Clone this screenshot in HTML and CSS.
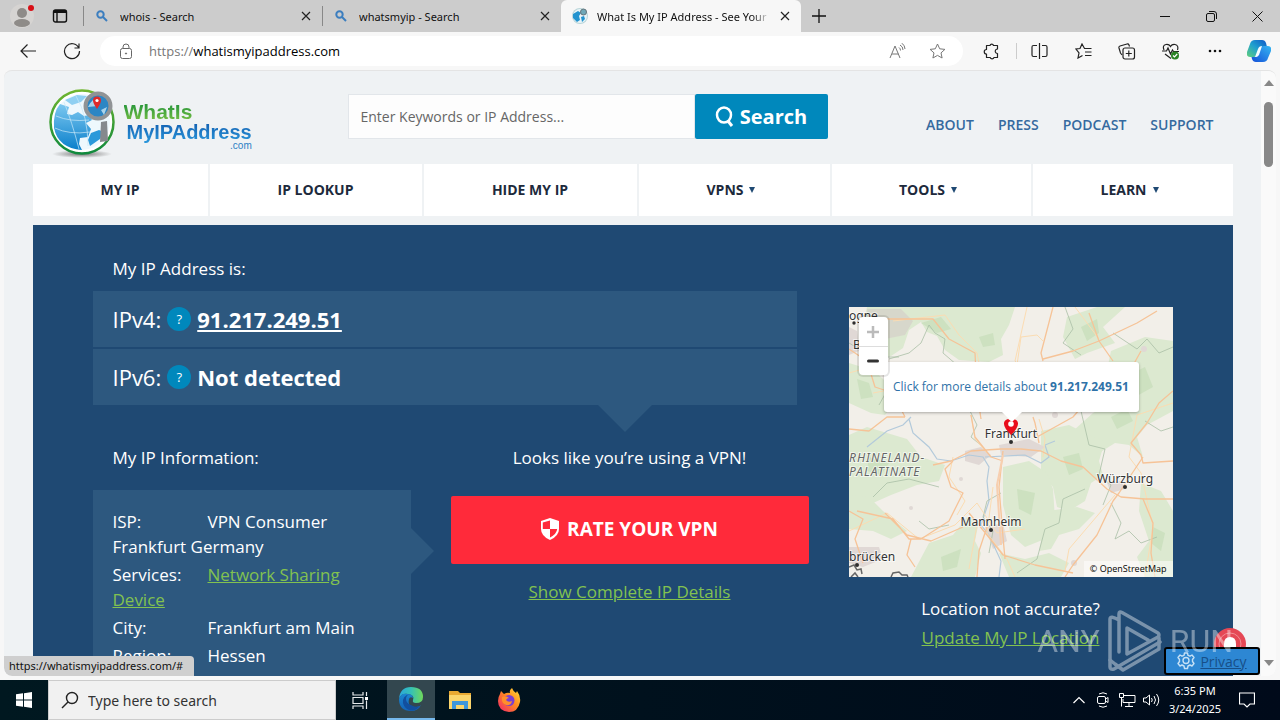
FILE: index.html
```html
<!DOCTYPE html>
<html lang="en">
<head>
    <meta charset="UTF-8">
    <meta name="viewport" content="width=device-width, initial-scale=1.0">
    <title>What Is My IP Address</title>
    <link rel="stylesheet" href="styles.css">
</head>
<body>
    <!-- Browser tabs -->
    <header class="tabstrip">
        <button class="profile" aria-label="Profile">
            <svg width="24" height="24" viewBox="0 0 24 24"><circle cx="12" cy="12" r="12" fill="#d6d4d2"/><circle cx="12" cy="9" r="5" fill="#8e8b88"/><ellipse cx="12" cy="19" rx="8" ry="4" fill="#8e8b88"/><circle cx="21" cy="4" r="3" fill="#d80f16"/></svg>
        </button>
        <button class="workspaces" aria-label="Tab actions">
            <svg width="16" height="16" viewBox="0 0 16 16" fill="none" stroke="#111" stroke-width="1.4"><rect x="1.5" y="2" width="13" height="12" rx="2"/><path d="M2 3.5h12" stroke-width="3"/><path d="M5 4v10"/></svg>
        </button>
        <div class="tab">
            <svg width="12" height="12" viewBox="0 0 12 12" fill="none" stroke="#3c7ebf" stroke-width="2"><circle cx="4.5" cy="4.5" r="3.2"/><path d="M7 7l4 4"/></svg>
            <span class="tab-title">whois - Search</span>
            <button class="tab-close" aria-label="Close tab"><svg width="10" height="10" viewBox="0 0 10 10" stroke="#222" stroke-width="1.2"><path d="M1 1l8 8M9 1l-8 8"/></svg></button>
        </div>
        <div class="tab">
            <svg width="12" height="12" viewBox="0 0 12 12" fill="none" stroke="#3c7ebf" stroke-width="2"><circle cx="4.5" cy="4.5" r="3.2"/><path d="M7 7l4 4"/></svg>
            <span class="tab-title">whatsmyip - Search</span>
            <button class="tab-close" aria-label="Close tab"><svg width="10" height="10" viewBox="0 0 10 10" stroke="#222" stroke-width="1.2"><path d="M1 1l8 8M9 1l-8 8"/></svg></button>
        </div>
        <div class="tab active">
            <svg width="16" height="16" viewBox="0 0 16 16"><circle cx="8" cy="8" r="8" fill="#b9d5d9"/><circle cx="8" cy="8" r="7" fill="#e9f4f8"/><path d="M1 6l5-3 3 2-2 3 1 4-3 2-4-4zM9 9l3-1 1 3-3 3z" fill="#2293cf"/><circle cx="11.500" cy="4" r="3" fill="#6fa8b8" stroke="#64747a"/></svg>
            <span class="tab-title fade">What Is My IP Address - See Your</span>
            <button class="tab-close" aria-label="Close tab"><svg width="10" height="10" viewBox="0 0 10 10" stroke="#222" stroke-width="1.2"><path d="M1 1l8 8M9 1l-8 8"/></svg></button>
        </div>
        <button class="new-tab" aria-label="New tab"><svg width="14" height="14" viewBox="0 0 14 14" stroke="#111" stroke-width="1.3"><path d="M7 0v14M0 7h14"/></svg></button>
        <div class="window-controls">
            <button aria-label="Minimize"><svg width="10" height="10" viewBox="0 0 10 10" stroke="#111"><path d="M0 5.500h10"/></svg></button>
            <button aria-label="Restore"><svg width="11" height="11" viewBox="0 0 11 11" fill="none" stroke="#111"><rect x=".5" y="2.500" width="8" height="8" rx="1.500"/><path d="M3 .5h5q2.500 0 2.500 2.500v5"/></svg></button>
            <button aria-label="Close"><svg width="11" height="11" viewBox="0 0 11 11" stroke="#111"><path d="M.5.5l10 10M10.500.5l-10 10"/></svg></button>
        </div>
    </header>

    <!-- Address bar -->
    <div class="toolbar">
        <button class="tool" aria-label="Back"><svg width="16" height="14" viewBox="0 0 16 14" fill="none" stroke="#222" stroke-width="1.2"><path d="M16 7H1M7.500.5L1 7l6.500 6.500"/></svg></button>
        <button class="tool" aria-label="Refresh"><svg width="18" height="18" viewBox="0 0 18 18" fill="none" stroke="#222" stroke-width="1.2"><path d="M15.800 6A7.500 7.500 0 1 0 16.500 9M16 1.500V6h-4.500"/></svg></button>
        <form class="address">
            <svg class="lock" width="14" height="16" viewBox="0 0 14 16" fill="none" stroke="#666"><rect x="1.500" y="5.500" width="11" height="10" rx="2"/><path d="M4 5.500V4a3 3 0 0 1 6 0v1.500"/><circle cx="7" cy="10.500" r=".6" fill="#666"/></svg>
            <label class="scheme" for="url">https://</label>
            <input id="url" class="url" type="text" value="whatismyipaddress.com">
            <button type="button" class="address-btn" aria-label="Read aloud"><svg width="17" height="16" viewBox="0 0 17 16" fill="none" stroke="#777"><path d="M1 15L6 3l5 12M3 11h6.500M10 4.500q1.500 1 1.500 3M11 2q3 1.500 3 5M12.500 0Q16 2 16 6"/></svg></button>
            <button type="button" class="address-btn" aria-label="Add to favorites"><svg width="17" height="16" viewBox="0 0 17 16" fill="none" stroke="#777"><path d="M8.500 1l2.200 4.800 5.200.6-3.900 3.500 1.100 5.100-4.600-2.600L3.900 15 5 9.900 1.100 6.400l5.200-.6z" stroke-linejoin="round"/></svg></button>
        </form>
        <button class="tool extensions" aria-label="Extensions"><svg width="17" height="17" viewBox="0 0 17 17" fill="none" stroke="#222" stroke-width="1.200"><path d="M3.500 2.500H7a1.800 1.800 0 0 1 3.500 0h4V6a1.800 1.800 0 1 0 0 4.500v4H11a2 2 0 0 1-3.800 0H3.500V11a1.900 1.900 0 0 1 0-4.500z" stroke-linejoin="round"/></svg></button>
        <span class="divider"></span>
        <button class="tool" aria-label="Split screen"><svg width="17" height="16" viewBox="0 0 17 16" fill="none" stroke="#222" stroke-width="1.200"><path d="M6 2.500H2.500q-1.500 0-1.500 1.500v8q0 1.500 1.500 1.500H6M11 2.500h3.500q1.500 0 1.500 1.500v8q0 1.500-1.500 1.500H11M8.500 0v16"/></svg></button>
        <button class="tool" aria-label="Favorites"><svg width="17" height="16" viewBox="0 0 17 16" fill="none" stroke="#222" stroke-width="1.200"><path d="M12 5.500H9.500L7 1 5 5.500 1 6l3 4-1 5 4.500-2.500M10 5.500h6.500M10 9h6.500M10 12.500h6.500"/></svg></button>
        <button class="tool" aria-label="Collections"><svg width="18" height="17" viewBox="0 0 18 17" fill="none" stroke="#222" stroke-width="1.200"><path d="M4 12L2.500 10 1 5q-.4-1.600 1-2l7-2q1.500-.3 2 1l.5 1.500"/><rect x="5" y="5" width="11.500" height="11" rx="2"/><path d="M10.800 7.500v6M7.800 10.500h6"/></svg></button>
        <button class="tool" aria-label="Browser essentials"><svg width="18" height="17" viewBox="0 0 18 17" fill="none" stroke="#222" stroke-width="1.200"><path d="M2 7Q0 2.500 4 1.500q3-.5 4.500 2Q10 1 13 1.500q4 1 2.500 5.500M0 8h4.500l1.500-3 2.500 6 2-4 1 1.500H17M3 11l6 4.500"/><circle cx="13" cy="12.500" r="4" fill="#2a8224" stroke="none"/><path d="M11 12.500l1.500 1.500 2.700-3" stroke="#fff"/></svg></button>
        <button class="tool" aria-label="Settings and more"><svg width="14" height="4" viewBox="0 0 14 4" fill="#111"><circle cx="2" cy="2" r="1.300"/><circle cx="7" cy="2" r="1.300"/><circle cx="12" cy="2" r="1.300"/></svg></button>
        <button class="tool" aria-label="Copilot">
            <svg width="24" height="22" viewBox="0 0 24 22">
                <defs>
                    <linearGradient id="cpA" x1="0" y1="1" x2="1" y2="0"><stop offset="0" stop-color="#62cf7c"/><stop offset=".5" stop-color="#1fa0cf"/><stop offset="1" stop-color="#0f56c8"/></linearGradient>
                    <linearGradient id="cpB" x1="0" y1="1" x2="1" y2="0"><stop offset="0" stop-color="#1550d8"/><stop offset="1" stop-color="#35b6f2"/></linearGradient>
                </defs>
                <path d="M8 0h7q3 0 4 3l1 4h-5q-3 0-4 4l-1 4q-1 2-3 2H3q-4 0-3-5L3 4q1-4 5-4z" fill="url(#cpA)"/>
                <path d="M16 22H9q-3 0-4-3l-.5-2H8q3 0 4-4l1-4q1-3 4-3h4q4 0 3 5l-3 7q-1 4-5 4z" fill="url(#cpB)"/>
                <path d="M11 9q1-3 4-3l-3 9q-1 2-4 2z" fill="#f5fbff"/>
            </svg>
        </button>
    </div>

    <!-- Page -->
    <div class="viewport">
        <main class="page">
            <div class="container">
                <div class="site-header">
                    <a class="logo" href="#">
                        <svg width="68" height="72" viewBox="0 0 68 72">
                            <defs>
                                <linearGradient id="ring" x1="0" y1="0" x2="0" y2="1"><stop offset="0" stop-color="#6fb52f"/><stop offset="1" stop-color="#0f8a3d"/></linearGradient>
                                <linearGradient id="sea" x1="0" y1="0" x2="0" y2="1"><stop offset="0" stop-color="#7cc8f0"/><stop offset="1" stop-color="#0a7fcb"/></linearGradient>
                                <radialGradient id="shade"><stop offset="0" stop-color="#777"/><stop offset="1" stop-color="#eff2f4"/></radialGradient>
                            </defs>
                            <ellipse cx="34" cy="67" rx="30" ry="4" fill="url(#shade)"/>
                            <circle cx="34" cy="35" r="31.500" fill="#fff" stroke="url(#ring)" stroke-width="2.500"/>
                            <circle cx="34" cy="35" r="28" fill="#eef8fd"/>
                            <path d="M12 17l9 3-2 7 5 1 6-3 6 4 5-1 3 5-6 3 5 6-3 8-8 1-1 6 3 6Q10 61 6 41 5 25 12 17z" fill="url(#sea)"/>
                            <path d="M17 13l12-5 10 1-6 6-9 3z" fill="#8fd0f2"/>
                            <path d="M42 59l10-7 4-7-5-2-8 3-3 7z" fill="#2a99da"/>
                            <path d="M8 29q14 6 33 4M7 41q14 7 35 4M16 15q8 20 15 47M28 9q12 20 12 50" fill="none" stroke="#c9e8f8" stroke-width=".7"/>
                            <path d="M53 35l6-1 1 20-8 1z" fill="#85898d"/>
                            <circle cx="50" cy="19" r="12.500" fill="#2c86c4" stroke="#909395" stroke-width="4"/>
                            <path d="M40 20q4-9 12-10l-2 9zM53 23l6-3-3 8z" fill="#a9d3ea"/>
                            <path d="M49 22q-4-6-4-8.500a4 4 0 0 1 8 0q0 2.500-4 8.500z" fill="#df2a2a"/><circle cx="49" cy="13.500" r="1.600" fill="#fff"/>
                        </svg>
                        <span class="logo-text">
                            <span class="logo-top">WhatIs</span>
                            <span class="logo-bottom">MyIPAddress</span>
                            <span class="logo-com">.com</span>
                        </span>
                    </a>
                    <form class="search">
                        <input type="text" placeholder="Enter Keywords or IP Address..." aria-label="Search">
                        <button type="button"><svg width="20" height="22" viewBox="0 0 20 22" fill="none" stroke="#fff" stroke-width="2.500"><ellipse cx="9" cy="9" rx="7" ry="7.500"/><path d="M13 15l4 5" stroke-width="3"/></svg>Search</button>
                    </form>
                    <nav class="top-links">
                        <a href="#">ABOUT</a>
                        <a href="#">PRESS</a>
                        <a href="#">PODCAST</a>
                        <a href="#">SUPPORT</a>
                    </nav>
                </div>

                <nav class="main-nav">
                    <a href="#">MY IP</a>
                    <a href="#">IP LOOKUP</a>
                    <a href="#">HIDE MY IP</a>
                    <a href="#">VPNS <span class="arrow"></span></a>
                    <a href="#">TOOLS <span class="arrow"></span></a>
                    <a href="#">LEARN <span class="arrow"></span></a>
                </nav>

                <section class="hero">
                    <div class="hero-left">
                        <p class="heading">My IP Address is:</p>
                        <div class="ip-list">
                            <div class="ip-row"><span>IPv4:</span><button class="help">?</button><a href="#">91.217.249.51</a></div>
                            <div class="ip-row"><span>IPv6:</span><button class="help">?</button><strong>Not detected</strong></div>
                        </div>
                        <div class="details">
                            <div class="info">
                                <p class="heading">My IP Information:</p>
                                <div class="info-panel">
                                    <p><span class="label">ISP:</span>VPN Consumer Frankfurt Germany</p>
                                    <p><span class="label">Services:</span><a href="#">Network Sharing Device</a></p>
                                    <p><span class="label">City:</span>Frankfurt am Main</p>
                                    <p><span class="label">Region:</span>Hessen</p>
                                </div>
                            </div>
                            <div class="vpn">
                                <p>Looks like you’re using a VPN!</p>
                                <button class="rate"><svg width="18" height="22" viewBox="0 0 18 22"><path d="M9 0l9 3v8q0 7-9 11-9-4-9-11V3z" fill="#fff"/><path d="M9 2.500V11H1.800V4.500zM9 11h7.200q-.5 5-7.200 8.500z" fill="#ff2a3a"/></svg>RATE YOUR VPN</button>
                                <a href="#">Show Complete IP Details</a>
                            </div>
                        </div>
                    </div>

                    <div class="hero-right">
                        <div class="map">
                            <svg class="map-art" viewBox="0 0 324 270" preserveAspectRatio="xMidYMid slice">
                                <rect width="324" height="270" fill="#f2efe9"/>
                                <g fill="#dce9d0">
                                    <path d="M18 0h148l-6 18-8 14 2 16-14 7-30-2-14-10-8-14-10-4-6-10-12 8-6 18-12 8-22 4-8-20z"/>
                                    <path d="M0 56l26 8 14 14 4 20-8 10-14-2-22-10zM0 128l18-8 20 6 20 6 14 18 24 8-6 16-22 4-26 10-18 8-24-6z"/>
                                    <path d="M218 10l30-10h28l-22 20 12 16-28 10-12 6-12-22z"/>
                                    <path d="M262 44l34-14 28 4v70l-26 14-10 12 6 20-14-12-14-2-16 10-20-4-6-18 20-18 18-10-6-24z"/>
                                    <path d="M192 124l28-6 20 10 16 6-6 20 4 14-12 8-6 18-16 10-12-4-4-20-12-14z"/>
                                    <path d="M154 160l26-6 18 12 6 16 2 30-10 20-20 8-14-12-8-30z"/>
                                    <path d="M0 188l20 2 14 14 24 20-16 8-18-8-24-2zM80 236l24-8 14-18 12 4-4 20 6 12-6 24H62zM150 246l26 6 24-6 20 10-8 14h-52z"/>
                                    <path d="M292 176l20 8 12 20v66h-28l-8-20 12-16-10-30zM198 204l30-4 18 6-16 16-20 6-8 14-12 2z"/>
                                </g>
                                <g fill="#c6ddb9" opacity=".7">
                                    <path d="M72 16l20-6 10 12-14 4zM8 72l12 4 4 14-12 2zM20 150l20 6-8 12-14-4zM168 182l18 4-4 22-12-6zM214 150l16-4 4 16-14 6zM276 70l20-10 8 20-18 10zM304 220l12 6-4 18-10-8zM92 250l20-8-4 18-14 4zM232 20l16-8 2 14-12 8zM130 30l14-4 2 12-12 2zM262 110l16-8 6 12-16 8z"/>
                                </g>
                                <path d="M18 2h34l12 12-8 14-20 4-16-10z" fill="#d7d7cb"/>
                                <g fill="#e0d8d5">
                                    <path d="M116 144l16-4 10 8-12 10-14-4zM150 138l30-6 16 8-14 10-30-2zM136 220l18-4 4 18-14 8zM0 240l30 0 4 12-20 8-14-4zM258 176l14-2 4 8-14 4zM0 20l8 4 2 20-10 4z"/>
                                    <circle cx="62" cy="201" r="2"/><circle cx="245" cy="92" r="3"/><circle cx="206" cy="108" r="3"/><circle cx="295" cy="42" r="3"/><circle cx="225" cy="256" r="3"/><circle cx="112" cy="172" r="2"/>
                                </g>
                                <g fill="none" stroke="#b3cadb" stroke-width="1.200">
                                    <path d="M60 112l4 14 16 14 8 12 14 2 18-6 14 2 6 10-2 14 2 20-8 24 8 10 12 26-2 16M18 140l20-16 16-6 8-8"/>
                                    <path d="M136 150l40-2 16 8 8-6-4-12 10-4"/>
                                </g>
                                <g fill="none" stroke="#aabfa6" stroke-width=".8">
                                    <path d="M40 52l20-6 12-10 8-18 6 8 10 6-2 14 14 12 12 10M120 102l8 16-6 12 12 10M206 72l8 22 18 10 8 34 16 4-6 26 12 10-8 20M264 26l24 16 10-10 12 14 14-6M152 186l-14 8-4 16 10 14-4 22M262 196l10 20-6 16 14-8 12 12 16-6M236 182l-22 10-4 24-14 6-8 30-20 14M84 88l14-8 20 4M60 74l-20 6-10 18M0 36l24 14 26 0M216 0l8 22-10 14 18 12M296 114l16 10 12-4M24 190l14-14 22-4 30 8M70 214l10 8 20-4"/>
                                </g>
                                <g fill="none" stroke="#fbdcb2" stroke-width="1">
                                    <path d="M44 14l52-6 14 20 18 18 2 10M178 0l-12 54 10 10M168 58l4-28 16-2 6 6M226 0l24 32M324 96l-36 12-8 42 12 16 12 54-8 50M0 224l38-18 32 26 36-14 22-22 20 30 28-4M122 108l4 24 12 14M190 112l6 20-2 18M56 80L24 86M0 66l28-8M128 218l-8 44M144 180l-6 46 20 26 8 18M216 264l4-22 46-54M104 150l-4 20 16 24-8 14"/>
                                </g>
                                <g fill="none" stroke="#f6c397" stroke-width="1.300" stroke-linejoin="round">
                                    <path d="M20 12h64l16 20 26 14 2 40 4 26M194 52l30-8 26-10 38-18 20-12M204 0l-12 46 2 8M240 6l10 28 14 20M0 42l18 12 8 26 18 6 12 24"/>
                                    <path d="M0 122l20 2 18-14h18M84 158l18-4 20-10 30-2 20 0 20 2 20 10 22 6 24 22 14 8 24 2h48M122 108l4 22 16 20 12 4M188 130l36-20 24-28 34-20 10-18M190 136l-4-20-2-6M324 84l-14 12-12 20-16 20 10 12 2 8 30-2M264 194l-16 34-24 30-8 12"/>
                                    <path d="M154 144l-4 36 4 50 2 22M104 154l-8 8 6 18 12 6-14 28-28 18-12 0-16-20-36-8M36 206l22 22 24 6 32-14M62 232l-4 16 8 12M120 206l18 22 16 20 32 10 38 8M138 220l-8 24-2 26M294 150l-12 18-12 18-6 8M294 192l10 24-2 30 4 24M0 204l14 8-8 20 8 24"/>
                                </g>
                                <path d="M154 148l-6 30 4 60" fill="none" stroke="#f7cfb0" stroke-width="2"/>
                                <path d="M0 260l5-2 3 5 4-1 1 5M2 270l4-4 3 4M42 270l2-4 6-1 3 3 5 0 1 2" fill="none" stroke="#666" stroke-width="1.500"/>
                                <g fill="#2d2d2d" stroke="none"><circle cx="5" cy="16" r="1.700"/><circle cx="162" cy="135" r="2"/><circle cx="276" cy="180" r="2"/><circle cx="142" cy="223" r="2"/><circle cx="8" cy="258" r="2"/></g>
                                <g class="map-labels">
                                    <text x="0" y="13">ogne</text>
                                    <text x="4" y="42">B</text>
                                    <text x="162" y="131" text-anchor="middle">Frankfurt</text>
                                    <text x="276" y="176" text-anchor="middle">Würzburg</text>
                                    <text x="142" y="219" text-anchor="middle">Mannheim</text>
                                    <text x="0" y="254">brücken</text>
                                    <text class="region" x="0" y="155">RHINELAND-</text>
                                    <text class="region" x="0" y="169">PALATINATE</text>
                                </g>
                                <path d="M162 128q-7-7-7-11a7 5 0 0 1 4-5l3 2 3-2a7 5 0 0 1 4 5q0 4-7 11z" fill="#e90d1b"/><circle cx="162" cy="117" r="2.800" fill="#fff"/>
                            </svg>
                            <div class="popup"><a href="#">Click for more details about <b>91.217.249.51</b></a></div>
                            <div class="zoom">
                                <button disabled aria-label="Zoom in"><svg width="12" height="12" viewBox="0 0 12 12" stroke="#bbb" stroke-width="2.500"><path d="M6 0v12M0 6h12"/></svg></button>
                                <button aria-label="Zoom out"><svg width="12" height="12" viewBox="0 0 12 12" stroke="#333" stroke-width="3" stroke-linecap="round"><path d="M1.500 6h9"/></svg></button>
                            </div>
                            <span class="credit">© OpenStreetMap</span>
                        </div>
                        <div class="location">
                            <p>Location not accurate?</p>
                            <a href="#">Update My IP Location</a>
                        </div>
                    </div>
                </section>
            </div>
        </main>

        <div class="scrollbar">
            <svg width="10" height="6" viewBox="0 0 10 6"><path d="M5 0l5 6H0z" fill="#888"/></svg>
            <div class="thumb"></div>
            <svg width="10" height="6" viewBox="0 0 10 6"><path d="M0 0h10L5 6z" fill="#888"/></svg>
        </div>

        <div class="status">https://whatismyipaddress.com/#</div>

        <svg class="bell" width="32" height="32" viewBox="0 0 32 32"><circle cx="16" cy="16" r="16" fill="#e54855"/><circle cx="16" cy="16" r="11" fill="none" stroke="#f28d94"/><path d="M10 22v-6q0-7 6-7t6 7v6z" fill="#fff"/></svg>
        <a class="privacy" href="#"><svg width="18" height="18" viewBox="0 0 18 18" fill="none" stroke="#c5e0f5" stroke-width="1.400"><path d="M7.500 1h3l.5 2.300 2 .9 2-1.200 2 2.500-1.500 2v2l1.500 2-2 2.500-2-1-2 1-.5 2.500h-3L7 14l-2-1-2 1-2-2.500 1.500-2v-2L1 5.500 3 3l2 1.200 2-.9z" stroke-linejoin="round"/><circle cx="9" cy="8.500" r="3"/></svg>Privacy</a>

        <div class="watermark">
            <span>ANY</span>
            <svg width="56" height="62" viewBox="0 0 56 62" fill="none" stroke="#fff" stroke-width="3.500" stroke-linejoin="round" stroke-linecap="round"><path d="M12 42V4q0-3 3-1.500L51 23q2 2 0 4L20 44V18l21 12M12 10q-9-5-9-1v48q0 3 4 2l46-27"/><path d="M3 50l5 4 8 6 36-21V28"/></svg>
            <span>RUN</span>
        </div>
    </div>

    <!-- Windows taskbar -->
    <footer class="taskbar">
        <button class="start" aria-label="Start"><svg width="16" height="16" viewBox="0 0 16 16" fill="#fff"><path d="M0 2.300l7-1v6.200H0zM8 1.200L16 0v7.500H8zM0 8.500h7v6.300l-7-1zM8 8.500h8V16l-8-1.200z"/></svg></button>
        <label class="task-search">
            <svg width="18" height="18" viewBox="0 0 18 18" fill="none" stroke="#222" stroke-width="1.400"><circle cx="11" cy="7" r="5.500"/><path d="M7 11l-6 6"/></svg>
            <input type="text" placeholder="Type here to search">
        </label>
        <button class="task-btn" aria-label="Task view"><svg width="17" height="17" viewBox="0 0 17 17" fill="none" stroke="#e6eaec" stroke-width="1.200"><path d="M1 0v3h10V0M1 17v-3h10v3M1 5.500h10v6H1zM14.500 0v4M14.500 8.500V17"/><path d="M13 5h3v3h-3z" fill="#fff" stroke="none"/></svg></button>
        <button class="task-btn current" aria-label="Edge">
            <svg width="26" height="26" viewBox="0 0 26 26">
                <defs>
                    <linearGradient id="edA" x1="0" y1="0" x2="1" y2="0"><stop offset="0" stop-color="#2aa7dc"/><stop offset=".5" stop-color="#35c1b6"/><stop offset="1" stop-color="#70d95a"/></linearGradient>
                    <linearGradient id="edB" x1="0" y1="0" x2="0" y2="1"><stop offset="0" stop-color="#1b86d1"/><stop offset="1" stop-color="#1463b6"/></linearGradient>
                </defs>
                <path d="M1 13Q2 1 13 1q12 0 12 10 0 6-7 6-4 0-3-3 2-5-5-6-7-1-9 5z" fill="url(#edA)"/>
                <path d="M1 13q2-6 8-5 6 0 6 4-3-2-4 1-2 7 5 8 5 0 7-2-3 6-10 6Q1 25 1 13z" fill="url(#edB)"/>
                <path d="M8 13q0-4 4-5-8 2-7 9 1 5 6 7 6 2 11-4-5 2-9-1-5-2-5-6z" fill="#124f9e"/>
            </svg>
        </button>
        <button class="task-btn" aria-label="File Explorer"><svg width="22" height="20" viewBox="0 0 22 20"><path d="M0 1h9l2 2h11v16H0z" fill="#e9a932"/><path d="M0 5h22v14H0z" fill="#fbd56c"/><path d="M3 19v-8h16v8h-4v-4H7v4z" fill="#3f97dc"/></svg></button>
        <button class="task-btn" aria-label="Firefox">
            <svg width="24" height="24" viewBox="0 0 24 24">
                <defs><linearGradient id="fx" x1="1" y1="0" x2="0" y2="1"><stop offset="0" stop-color="#ffe23b"/><stop offset=".45" stop-color="#ff8a1f"/><stop offset="1" stop-color="#f0206f"/></linearGradient></defs>
                <path d="M3 6l1-3 3 3q3-2 6-1-1-3 2-5 1 3 4 5l1-2q4 5 3 11-2 10-11 10Q1 23 1 13q0-4 2-7z" fill="url(#fx)"/>
                <circle cx="12" cy="12.500" r="5.500" fill="#7a3fd0"/>
                <path d="M5 9q4-2 7 1-2 0-3 2 2 3 6 1-1 5-6 4-5-2-4-8z" fill="#ff8f2a"/>
            </svg>
        </button>
        <div class="tray">
            <button aria-label="Show hidden icons"><svg width="12" height="8" viewBox="0 0 12 8" fill="none" stroke="#fff" stroke-width="1.200"><path d="M.5 7L6 1.500 11.500 7"/></svg></button>
            <button aria-label="Camera"><svg width="12" height="16" viewBox="0 0 12 16" fill="none" stroke="#fff"><path d="M2 2q4-2.500 8 0M2 14q4 2.500 8 0"/><rect x=".5" y="4.500" width="8" height="7" rx="1.500"/><path d="M8.500 7L11 5.500v5L8.500 9"/></svg></button>
            <button aria-label="Network"><svg width="17" height="14" viewBox="0 0 17 14" fill="none" stroke="#fff"><path d="M5 2.500h11v7H4V6M10 9.500v4M6 13.500h8M.5.5h4v4h-4zM2.500 4.500v9"/></svg></button>
            <button aria-label="Volume"><svg width="17" height="14" viewBox="0 0 17 14" fill="none" stroke="#fff"><path d="M.5 5h2.500L6.500 2v10L3 9H.5zM8.500 5q1.500 2 0 4M11 3q3 4 0 8M13.500 1q4.500 6 0 12"/></svg></button>
        </div>
        <div class="clock"><span>6:35 PM</span><span>3/24/2025</span></div>
        <button class="notify" aria-label="Notifications"><svg width="16" height="16" viewBox="0 0 16 16" fill="none" stroke="#fff" stroke-width="1.200"><path d="M.5 1h15v11H11l-3 3-3-3H.5z"/></svg></button>
    </footer>
</body>
</html>
```
FILE: styles.css
```css
* {
    box-sizing: border-box;
}

body {
    margin: 0;
    height: 100vh;
    display: flex;
    flex-direction: column;
    overflow: hidden;
    background-color: #f7f7f7;
    font-family: "Open Sans", sans-serif;
}

p {
    margin: 0;
}

a {
    text-decoration: none;
}

button {
    display: flex;
    align-items: center;
    justify-content: center;
    padding: 0;
    border: 0;
    background: none;
    font-family: inherit;
    cursor: pointer;
}

input {
    border: 0;
    outline: 0;
    min-width: 0;
    font-family: inherit;
}

svg {
    flex-shrink: 0;
}

/* Tab strip */
.tabstrip {
    display: flex;
    height: 32px;
    background-color: #ccc;
    font-family: "Noto Sans", sans-serif;
}

.profile {
    width: 44px;
}

.workspaces {
    width: 39px;
    padding-right: 7px;
}

.tab {
    display: flex;
    align-items: center;
    gap: 12px;
    width: 239px;
    padding: 0 10px 0 13px;
    position: relative;
}

.tab::before {
    content: "";
    position: absolute;
    left: 0;
    top: 6px;
    width: 1px;
    height: 20px;
    background-color: #888;
}

.tab.active {
    gap: 9px;
    width: 240px;
    padding-left: 11px;
    background-color: #f7f7f7;
    border-radius: 6px 6px 0 0;
}

.tab.active::before {
    display: none;
}

.tab-title {
    flex: 1;
    overflow: hidden;
    white-space: nowrap;
    font-size: 11px;
    color: #111;
}

.fade {
    mask-image: linear-gradient(to right, #000 90%, transparent);
}

.tab-close {
    width: 12px;
    height: 20px;
}

.new-tab {
    width: 36px;
}

.window-controls {
    display: flex;
    margin-left: auto;
}

.window-controls button {
    width: 46px;
}

/* Toolbar */
.toolbar {
    display: flex;
    align-items: center;
    height: 38px;
    padding-left: 6px;
}

.tool {
    width: 44px;
    height: 30px;
}

.address {
    flex: 1;
    display: flex;
    align-items: center;
    height: 30px;
    margin: 0 0 0 6px;
    padding: 0 6px 0 19px;
    border-radius: 15px;
    background-color: #fff;
    font-size: 13px;
}

.lock {
    margin-right: 16px;
}

.scheme {
    color: #777;
}

.url {
    flex: 1;
    padding: 0;
    font-size: 13px;
    color: #000;
}

.address-btn {
    width: 40px;
    height: 30px;
}

.extensions {
    margin-left: 6px;
}

.divider {
    width: 1px;
    height: 16px;
    margin-left: 3px;
    background-color: #ccc;
}

.tool:last-child {
    width: 43px;
}

/* Page area */
.viewport {
    flex: 1;
    min-height: 0;
    display: flex;
    position: relative;
    margin: 0 4px 4px;
    border-radius: 8px;
    overflow: hidden;
    background-color: #eff2f4;
    border-top: 1px solid #e4e4e4;
}

.page {
    flex: 1;
    overflow: hidden;
}

.container {
    max-width: 1200px;
    margin: 0 auto;
}

.site-header {
    display: flex;
    align-items: center;
    height: 91px;
    margin-bottom: 2px;
    padding: 0 19px 0 15px;
}

.logo {
    display: flex;
    width: 300px;
    gap: 8px;
    margin-top: 13px;
}

.logo-text {
    display: flex;
    flex-direction: column;
    padding-top: 15px;
    font-family: "Liberation Sans", sans-serif;
    font-weight: bold;
    font-size: 21px;
    line-height: 20px;
}

.logo-top,
.logo-bottom {
    color: transparent;
    background-clip: text;
    background-image: linear-gradient(#2f9a3c 20%, #7ac143);
}

.logo-bottom {
    padding: 0 0 5px 3px;
    margin-bottom: -7px;
    font-size: 20px;
    background-image: linear-gradient(#1565b5 10%, #2fa3e4);
}

.logo-com {
    align-self: flex-end;
    font-size: 10px;
    line-height: 12px;
    font-weight: normal;
    color: #2a7fc4;
}

.search {
    display: flex;
    width: 480px;
    height: 45px;
}

.search input {
    flex: 1;
    padding: 0 12px;
    border: 1px solid #e2e6ea;
    font-size: 14px;
    background-color: #fdfdfd;
}

.search input::placeholder {
    color: #666;
}

.search button {
    width: 133px;
    gap: 5px;
    border-radius: 2px;
    background-color: #0088bc;
    color: #fff;
    font-size: 20px;
    font-weight: bold;
}

.top-links {
    display: flex;
    gap: 24px;
    margin-left: auto;
    padding-top: 16px;
}

.top-links a {
    color: #356a9f;
    font-size: 14px;
    font-weight: 600;
}

.main-nav {
    display: grid;
    grid-template-columns: 175fr 212fr 213fr 191fr 199fr 200fr;
    gap: 2px;
    margin-bottom: 9px;
}

.main-nav a {
    display: flex;
    align-items: center;
    justify-content: center;
    gap: 6px;
    height: 52px;
    padding-bottom: 1px;
    background-color: #fff;
    color: #1d2a3c;
    font-size: 14px;
    font-weight: bold;
}

.arrow {
    margin-right: 6px;
    border: 3px solid transparent;
    border-top: 6px solid #1f4973;
    border-bottom: 0;
}

/* Hero */
.hero {
    display: grid;
    grid-template-columns: minmax(0, 1fr) 324px;
    gap: 40px;
    min-height: 600px;
    padding: 32px 60px;
    background-color: #1f4973;
    color: #fff;
    font-size: 17px;
    line-height: 24px;
}

.heading {
    padding-left: 20px;
}

.hero a {
    color: #82c250;
    text-decoration: underline;
}

.ip-list {
    display: grid;
    gap: 2px;
    position: relative;
    margin: 10px 12px 41px 0;
}

.ip-list::after {
    content: "";
    position: absolute;
    top: 100%;
    right: 145px;
    border: 27px solid transparent;
    border-top-color: #2d587f;
    border-bottom: 0;
}

.ip-row {
    display: flex;
    align-items: center;
    gap: 6px;
    height: 56px;
    padding: 0 0 1px 20px;
    background-color: #2d587f;
    font-size: 22px;
}

.hero .ip-row a,
.ip-row strong {
    color: #fff;
    font-weight: bold;
}

.help {
    width: 24px;
    height: 24px;
    border-radius: 50%;
    background-color: #0088bc;
    color: #fff;
    font-size: 13px;
}

.details {
    display: grid;
    grid-template-columns: 318px minmax(0, 1fr);
    gap: 40px;
}

.info-panel {
    position: relative;
    margin-top: 20px;
    padding: 19px 20px 40px;
    background-color: #2d587f;
    line-height: 25px;
}

.info-panel::after {
    content: "";
    position: absolute;
    left: 100%;
    top: 38px;
    border: 23px solid transparent;
    border-left-color: #2d587f;
    border-right: 0;
}

.info-panel p {
    margin-bottom: 3px;
}

.label {
    display: inline-block;
    width: 95px;
}

.vpn {
    text-align: center;
}

.rate {
    width: 100%;
    height: 68px;
    gap: 8px;
    margin: 26px 0 16px;
    padding-bottom: 2px;
    border-radius: 2px;
    background-color: #ff2a3a;
    color: #fff;
    font-size: 19px;
    font-weight: bold;
}

.map {
    position: relative;
    height: 270px;
    margin-top: 50px;
    overflow: hidden;
}

.map-art {
    display: block;
    width: 100%;
    height: 100%;
}

.map-labels {
    font-family: "Noto Sans", sans-serif;
    font-size: 12px;
    fill: #333;
    stroke: #fff;
    stroke-width: 2px;
    stroke-opacity: 0.6;
    paint-order: stroke;
}

.region {
    font-size: 12px;
    font-style: italic;
    letter-spacing: 1px;
    fill: #666;
}

.popup {
    position: absolute;
    left: 35px;
    top: 55px;
    width: 255px;
    height: 50px;
    border-radius: 3px;
    background-color: #fff;
    font-size: 12px;
    line-height: 50px;
    text-align: center;
    box-shadow: 0 1px 3px rgba(0, 0, 0, 0.3);
}

.popup::after {
    content: "";
    position: absolute;
    left: 118px;
    top: 100%;
    border: 10px solid transparent;
    border-top-color: #fff;
    border-bottom: 0;
}

.hero .popup a {
    color: #2f72a8;
    text-decoration: none;
}

.zoom {
    position: absolute;
    left: 10px;
    top: 10px;
    border-radius: 4px;
    background-color: #fff;
    box-shadow: 0 0 0 2px rgba(0, 0, 0, 0.1);
}

.zoom button {
    width: 29px;
    height: 29px;
}

.zoom button + button {
    border-top: 1px solid #ddd;
}

.credit {
    position: absolute;
    right: 0;
    bottom: 0;
    padding: 0 6px;
    background-color: rgba(255, 255, 255, 0.5);
    color: #000;
    font-size: 9px;
    line-height: 16px;
}

.location {
    margin-top: 17px;
    text-align: center;
    line-height: 29px;
}

/* Scrollbar */
.scrollbar {
    display: flex;
    flex-direction: column;
    align-items: center;
    width: 15px;
    padding: 9px 0 10px;
    background-color: #fafafa;
}

.thumb {
    width: 9px;
    height: 65px;
    margin: 16px 0 auto;
    border-radius: 5px;
    background-color: #888;
}

/* Things floating over the page */
.status {
    position: absolute;
    left: 0;
    bottom: 0;
    padding: 0 11px 0 5px;
    border-radius: 0 4px 0 8px;
    background-color: #cfcfcf;
    color: #111;
    font-family: "Noto Sans", sans-serif;
    font-size: 11px;
    line-height: 20px;
}

.bell {
    position: absolute;
    right: 30px;
    bottom: 16px;
}

.privacy {
    display: flex;
    align-items: center;
    justify-content: center;
    gap: 5px;
    position: absolute;
    right: 16px;
    bottom: 1px;
    width: 96px;
    height: 28px;
    border: 2px solid #000;
    border-radius: 3px;
    background-color: #2d87d3;
    color: #174f88;
    font-size: 14px;
    text-decoration: underline;
}

.watermark {
    display: flex;
    align-items: center;
    gap: 7px;
    position: absolute;
    right: 43px;
    bottom: 4px;
    color: #fff;
    opacity: 0.4;
    pointer-events: none;
    font-family: Roboto, sans-serif;
    font-size: 32px;
    line-height: 62px;
}

/* Taskbar */
.taskbar {
    display: flex;
    height: 40px;
    background-image: linear-gradient(to right, #001820, #000a1a);
    color: #fff;
    font-family: "Noto Sans", sans-serif;
}

.start,
.task-btn {
    width: 48px;
}

.task-btn {
    margin-right: 1px;
}

.task-search {
    display: flex;
    align-items: center;
    gap: 9px;
    width: 288px;
    padding-left: 12px;
    border: 1px solid #ccc;
    background-color: #f1f1f1;
}

.task-search input {
    flex: 1;
    padding: 0;
    background: none;
    font-size: 14px;
}

.task-search input::placeholder {
    color: #333;
}

.current {
    margin-left: 2px;
    background-color: #33474f;
    border-bottom: 2px solid #76b9ed;
}

.tray {
    display: flex;
    margin-left: auto;
}

.tray button {
    width: 24px;
}

.clock {
    display: flex;
    flex-direction: column;
    justify-content: center;
    width: 64px;
    text-align: center;
    font-size: 11px;
    line-height: 18px;
}

.notify {
    width: 40px;
    margin-right: 13px;
}
```
